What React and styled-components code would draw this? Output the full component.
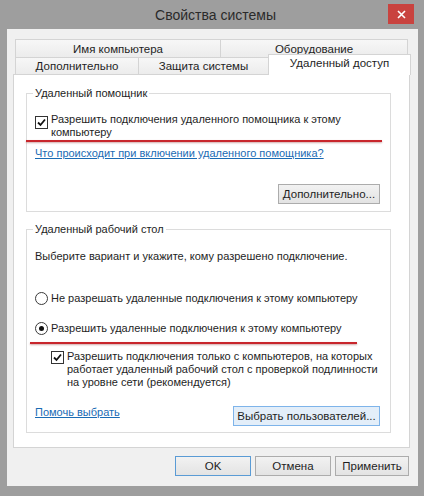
import React from 'react';
import styled, { createGlobalStyle } from 'styled-components';

const GlobalStyle = createGlobalStyle`
    html, body {
        margin: 0;
        padding: 0;
        background: #9e9e9e;
    }
    body {
        font-family: "Liberation Sans", Arial, sans-serif;
        font-size: 11px;
        color: #1e1e1e;
    }
`;

const Frame = styled.div`
    width: 424px;
    height: 496px;
    background: #9e9e9e;
    display: flex;
    flex-direction: column;
    box-sizing: border-box;
    padding: 0 6px 10px 7px;
`;

const TitleBar = styled.div`
    height: 32px;
    display: flex;
    align-items: center;
    justify-content: center;
    position: relative;
`;

const Title = styled.span`
    font-size: 14px;
    color: #2a2a2a;
    margin-left: 6px;
`;

const CloseButton = styled.div`
    position: absolute;
    right: 4px;
    top: 4px;
    width: 26px;
    height: 20px;
    background: #c9433f;
    display: flex;
    align-items: center;
    justify-content: center;
`;

const Body = styled.div`
    flex: 1;
    background: #f0f0f0;
    padding: 10px 8px 10px 6px;
    display: flex;
    flex-direction: column;
`;

const Tabs = styled.div`
    display: flex;
    flex-direction: column;
    margin: 0 2px;
`;

const TabRow = styled.div`
    display: flex;
    height: ${p => p.h}px;
`;

const Tab = styled.div`
    width: ${p => p.w}px;
    box-sizing: border-box;
    border: 1px solid #d4d4d4;
    border-bottom: none;
    margin-left: -1px;
    background: linear-gradient(#f7f7f7, #ececec);
    display: flex;
    align-items: center;
    justify-content: center;
    font-size: 11.5px;
    &:first-child {
        margin-left: 0;
    }
`;

const ActiveTab = styled(Tab)`
    background: #fff;
    height: 21px;
    margin-top: -3px;
    margin-right: -3px;
    position: relative;
    z-index: 2;
    padding-bottom: 4px;
`;

const Panel = styled.div`
    background: #fff;
    border: 1px solid #d4d4d4;
    padding: 12px 18px 14px 12px;
    display: flex;
    flex-direction: column;
    position: relative;
    z-index: 1;
`;

const Group = styled.fieldset`
    margin: ${p => p.top}px 0 0 0;
    border: 1px solid #dcdcdc;
    padding: 0 10px ${p => p.bottom}px 8px;
    display: flex;
    flex-direction: column;
    position: relative;
    min-width: 0;
`;

const Legend = styled.legend`
    line-height: 13px;
    padding: 0 2px;
    margin-left: -2px;
`;

const Line = styled.div`
    line-height: 13px;
    margin-top: ${p => p.top || 0}px;
`;

const OptionRow = styled.label`
    display: flex;
    align-items: flex-start;
    gap: 3px;
    line-height: 13px;
    margin-top: ${p => p.top || 0}px;
    padding-left: ${p => p.indent || 0}px;
`;

const Box = styled.span`
    flex: none;
    width: 13px;
    height: 13px;
    box-sizing: border-box;
    border: 1px solid #333;
    background: #fff;
    margin-top: ${p => p.offset || 0}px;
    display: flex;
    align-items: center;
    justify-content: center;
`;

const Radio = styled(Box)`
    border-radius: 50%;
    border-color: #3a3a3a;
`;

const Dot = styled.span`
    width: 5px;
    height: 5px;
    border-radius: 50%;
    background: #111;
`;

const Link = styled.a`
    color: #1a6bb4;
    text-decoration: underline;
    line-height: 13px;
    margin-top: ${p => p.top || 0}px;
    align-self: flex-start;
`;

const Button = styled.button`
    font-family: inherit;
    font-size: 11.5px;
    color: #1e1e1e;
    width: ${p => p.w}px;
    height: 20px;
    padding: 0;
    border: 1px solid ${p => (p.primary ? '#5a9bd5' : '#acacac')};
    background: ${p => (p.focus ? '#e3eef9' : 'linear-gradient(#f2f2f2, #e3e3e3)')};
    ${p => p.focus && 'border-color: #7eb4ea;'}
`;

const ButtonRight = styled.div`
    display: flex;
    justify-content: flex-end;
    margin-top: ${p => p.top}px;
`;

const BottomRow = styled.div`
    display: flex;
    justify-content: space-between;
    align-items: center;
    margin-top: 17px;
`;

const Footer = styled.div`
    display: flex;
    justify-content: flex-end;
    gap: 4px;
    margin-top: 8px;
    margin-right: 1px;
`;

const Highlight = styled.div`
    position: absolute;
    left: ${p => p.left}px;
    width: ${p => p.w}px;
    top: ${p => p.top}px;
    height: 2px;
    background: #c8262c;
    box-shadow: 0 1px 2px rgba(120, 0, 0, 0.35);
`;

const Check = () => (
    <svg width="9" height="9" viewBox="0 0 9 9">
        <path d="M1 4.5 L3.5 7 L8 1.5" fill="none" stroke="#111" strokeWidth="1.8" />
    </svg>
);

export default function App() {
    return (
        <>
            <GlobalStyle />
            <Frame>
                <TitleBar>
                    <Title>Свойства системы</Title>
                    <CloseButton>
                        <svg width="9" height="9" viewBox="0 0 9 9">
                            <path d="M1 1 L8 8 M8 1 L1 8" stroke="#fff" strokeWidth="1.6" />
                        </svg>
                    </CloseButton>
                </TitleBar>
                <Body>
                    <Tabs>
                        <TabRow h={18}>
                            <Tab w={206}>Имя компьютера</Tab>
                            <Tab w={188}>Оборудование</Tab>
                        </TabRow>
                        <TabRow h={17}>
                            <Tab w={124}>Дополнительно</Tab>
                            <Tab w={131}>Защита системы</Tab>
                            <ActiveTab w={143}>Удаленный доступ</ActiveTab>
                        </TabRow>
                    </Tabs>
                    <Panel>
                        <Group top={0} bottom={7}>
                            <Legend>Удаленный помощник</Legend>
                            <OptionRow top={13}>
                                <Box offset={3}><Check /></Box>
                                <span>Разрешить подключения удаленного помощника к этому<br />компьютеру</span>
                            </OptionRow>
                            <Highlight left={-1} w={356} top={40} />
                            <Link top={8}>Что происходит при включении удаленного помощника?</Link>
                            <ButtonRight top={24}>
                                <Button w={102}>Дополнительно...</Button>
                            </ButtonRight>
                        </Group>
                        <Group top={11} bottom={6}>
                            <Legend>Удаленный рабочий стол</Legend>
                            <Line top={14}>Выберите вариант и укажите, кому разрешено подключение.</Line>
                            <OptionRow top={29}>
                                <Radio />
                                <span>Не разрешать удаленные подключения к этому компьютеру</span>
                            </OptionRow>
                            <OptionRow top={17}>
                                <Radio><Dot /></Radio>
                                <span>Разрешить удаленные подключения к этому компьютеру</span>
                            </OptionRow>
                            <Highlight left={3} w={327} top={106} />
                            <OptionRow top={15} indent={16}>
                                <Box offset={1}><Check /></Box>
                                <span>
                                    Разрешить подключения только с компьютеров, на которых<br />
                                    работает удаленный рабочий стол с проверкой подлинности<br />
                                    на уровне сети (рекомендуется)
                                </span>
                            </OptionRow>
                            <BottomRow>
                                <Link>Помочь выбрать</Link>
                                <Button w={147} focus>Выбрать пользователей...</Button>
                            </BottomRow>
                        </Group>
                    </Panel>
                    <Footer>
                        <Button w={76} primary>OK</Button>
                        <Button w={76}>Отмена</Button>
                        <Button w={74}>Применить</Button>
                    </Footer>
                </Body>
            </Frame>
        </>
    );
}
